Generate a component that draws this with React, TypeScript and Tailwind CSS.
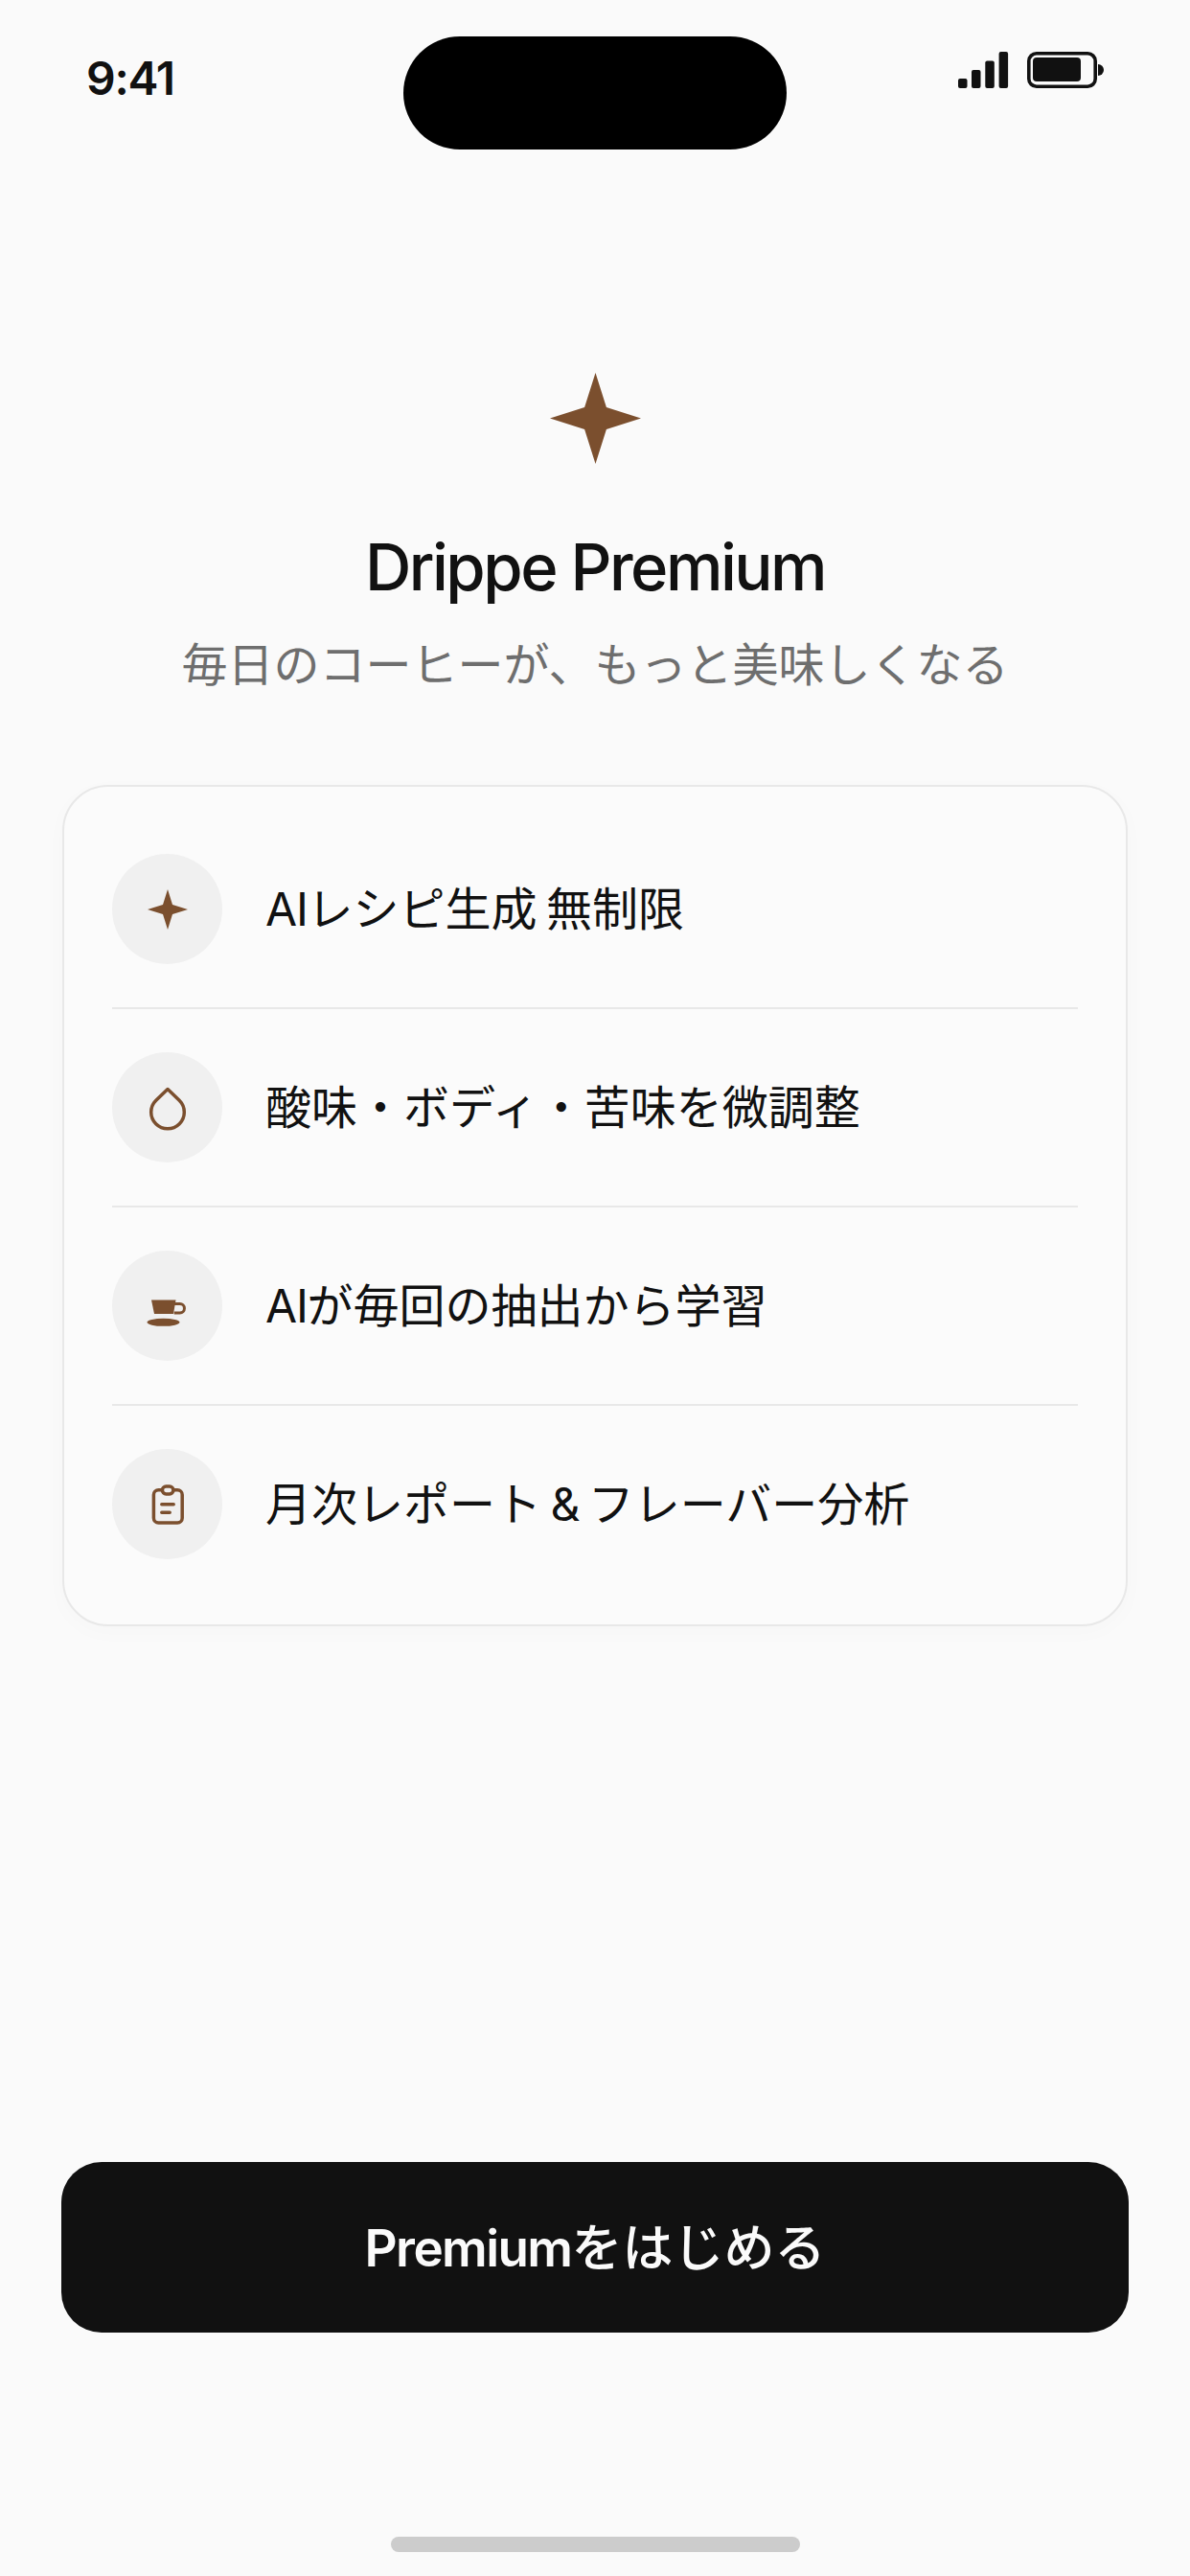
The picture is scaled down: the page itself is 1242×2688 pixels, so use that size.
const BROWN = "#7B4F2E";
const STAR = "50,0 62,38 100,50 62,62 50,100 38,62 0,50 38,38";

function Star({ className }: { className: string }) {
  return (
    <svg viewBox="0 0 100 100" className={className}>
      <polygon points={STAR} fill={BROWN} />
    </svg>
  );
}

function SmallStar() {
  return (
    <svg viewBox="0 0 48 48" className="w-[48px] h-[48px]">
      <polygon points="24,3 29,19 45,24 29,29 24,45 19,29 3,24 19,19" fill={BROWN} />
    </svg>
  );
}

function Drop() {
  return (
    <svg viewBox="0 0 48 48" className="w-[48px] h-[48px] overflow-visible">
      <path d="M24 4.5 L36.2 16.3 A17.3 17.3 0 1 1 11.8 16.3 Z" fill="none" stroke={BROWN} strokeWidth="3.5" strokeLinejoin="round" />
    </svg>
  );
}

function Cup() {
  return (
    <svg viewBox="0 0 48 48" className="w-[48px] h-[48px]">
      <polygon points="7,17.5 32.5,17.5 30,32 10,32" fill={BROWN} />
      <path d="M31 21.5 h5.7 a4.75 4.75 0 0 1 0 9.5 h-6" fill="none" stroke={BROWN} strokeWidth="3" />
      <ellipse cx="19.5" cy="40.8" rx="17" ry="4" fill={BROWN} />
    </svg>
  );
}

function Clipboard() {
  return (
    <svg viewBox="0 0 48 48" className="w-[48px] h-[48px]">
      <rect x="9.4" y="8.8" width="29.8" height="34.2" rx="5" fill="none" stroke={BROWN} strokeWidth="3.5" />
      <rect x="18.4" y="5.1" width="11.5" height="7.8" rx="3.9" fill="#f0f0f0" stroke={BROWN} strokeWidth="3.5" />
      <path d="M17.8 23.8 H30.2 M17.8 32.2 H26.2" fill="none" stroke={BROWN} strokeWidth="3.5" strokeLinecap="round" />
    </svg>
  );
}

function StatusIcons() {
  return (
    <svg viewBox="0 0 153 38" className="w-[153px] h-[38px]">
      <g fill="#111111">
        <rect x="0" y="28" width="9.5" height="10" rx="2" />
        <rect x="14" y="19" width="9.5" height="19" rx="2" />
        <rect x="28.3" y="9.5" width="9.5" height="28.5" rx="2" />
        <rect x="42.6" y="0" width="9.5" height="38" rx="2" />
        <rect x="78" y="6" width="50" height="25" rx="4" />
        <path d="M146 13 a6 6 0 0 1 0 12 z" />
      </g>
      <rect x="73.8" y="1.8" width="69.4" height="34.4" rx="8" fill="none" stroke="#111111" strokeWidth="3.6" />
    </svg>
  );
}

function Latin({ children }: { children: string }) {
  return <span className="tracking-[-1.2px]">{children}</span>;
}

const rows = [
  { icon: <SmallStar />, text: <><Latin>AI</Latin>レシピ生成 無制限</> , key: "a" },
  { icon: <Drop />, text: <>酸味・ボディ・苦味を微調整</>, key: "b" },
  { icon: <Cup />, text: <><Latin>AI</Latin>が毎回の抽出から学習</>, key: "c" },
  { icon: <Clipboard />, text: <>月次レポート <Latin>&amp;</Latin> フレーバー分析</>, key: "d" },
];

export default function App() {
  return (
    <div
      className="relative w-[1242px] h-[2688px] bg-[#fafafa] flex flex-col overflow-hidden text-[#111111]"
      style={{ fontFamily: 'Inter, "Noto Sans CJK JP", sans-serif' }}
    >
      <div className="absolute left-[421px] top-[38px] w-[400px] h-[118px] rounded-[59px] bg-black" />

      <div className="flex justify-between items-start h-[156px] pl-[90px] pr-[89px] pt-[54px]">
        <span className="text-[48px] leading-[56px] font-semibold tracking-[-1.2px]">9:41</span>
        <StatusIcons />
      </div>

      <div className="flex flex-col items-center">
        <Star className="w-[95px] h-[95px] mt-[233px]" />
        <h1 className="mt-[68px] text-[67px] leading-[80px] font-[550] tracking-[-2.5px] text-[#111111]">
          Drippe Premium
        </h1>
        <p className="mt-[30px] text-[48px] leading-[64px] text-[#6e6e6e]">
          毎日のコーヒーが、もっと美味しくなる
        </p>
      </div>

      <div className="mx-[65px] mt-[93px] px-[50px] pt-[25px] pb-[23px] rounded-[48px] border-2 border-[#e8e8e8] bg-[#fbfbfb] shadow-[0_6px_24px_rgba(0,0,0,0.02)]">
        {rows.map((r, i) => (
          <div
            key={r.key}
            className={`flex items-center gap-[45px] py-[45px] ${i < rows.length - 1 ? "border-b-2 border-[#e8e8e8]" : ""}`}
          >
            <div className="w-[115px] h-[115px] rounded-full bg-[#f0f0f0] flex items-center justify-center shrink-0">
              {r.icon}
            </div>
            <span className="text-[48px] leading-[64px] text-[#111111] [word-spacing:-4px]">{r.text}</span>
          </div>
        ))}
      </div>

      <button className="mx-[64px] mt-auto h-[178px] pt-[3px] rounded-[42px] bg-[#111111] text-[#fafafa] text-[53px] font-medium flex items-center justify-center">
        <span className="font-semibold tracking-[-1.6px]">Premium</span>をはじめる
      </button>

      <div className="mt-[213px] mb-[25px] mx-auto w-[427px] h-[16px] rounded-full bg-[#cccccc]" />
    </div>
  );
}
